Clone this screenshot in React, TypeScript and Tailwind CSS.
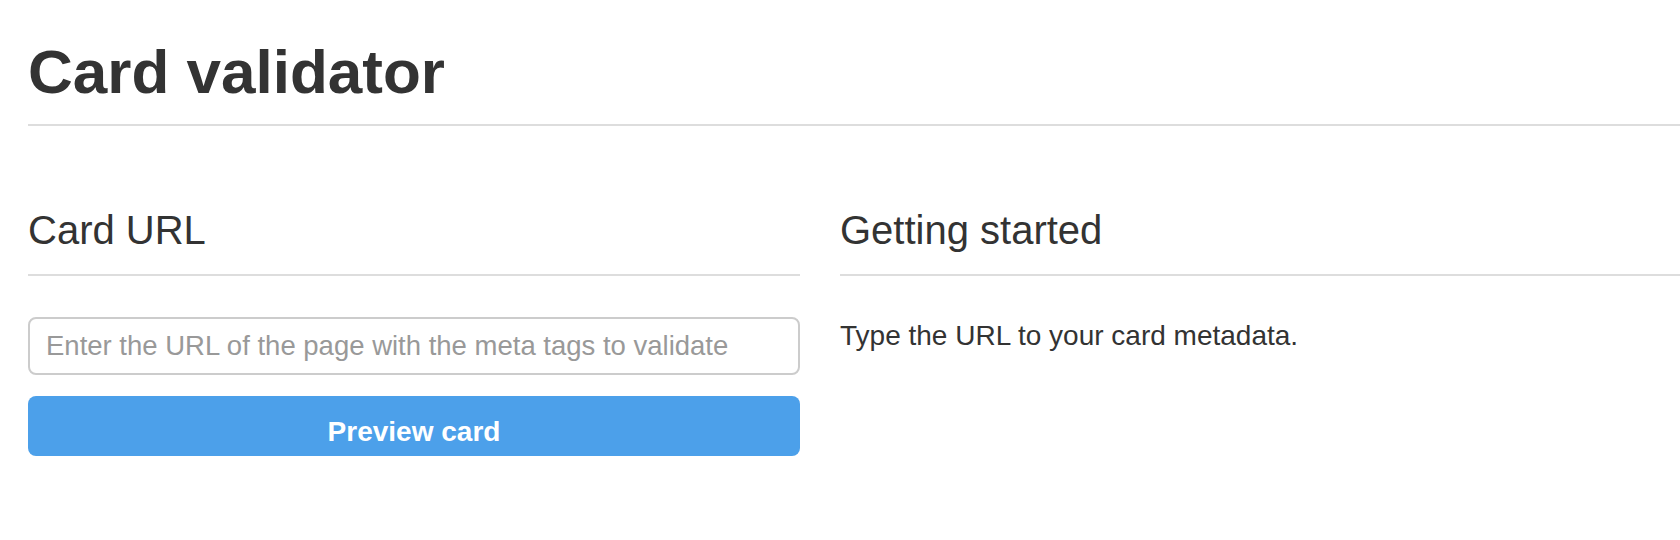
export default function App() {
  return (
    <div
      className="h-[540px] w-full overflow-hidden bg-white pl-[28px] text-[#333]"
      style={{ fontFamily: '"Liberation Sans", Arial, sans-serif' }}
    >
      <div className="border-b-2 border-[#ddd] pb-[17px] pt-[37px]">
        <h1 className="text-[62px] font-bold leading-[70px]">Card validator</h1>
      </div>

      <div className="mt-[80px] flex gap-[40px]">
        <div className="w-[772px] shrink-0">
          <h3 className="border-b-2 border-[#ddd] pb-[20px] text-[40px] leading-[48px]">
            Card URL
          </h3>
          <input
            type="text"
            placeholder="Enter the URL of the page with the meta tags to validate"
            className="mt-[41px] block h-[58px] w-full rounded-[8px] border-2 border-[#ccc] px-[16px] text-[27.5px] text-[#333] outline-none placeholder:text-[#999]"
          />
          <button className="mt-[21px] flex h-[60px] w-full items-center justify-center rounded-[8px] bg-[#4ca0ea] pt-[12px] text-[28px] font-bold text-white">
            Preview card
          </button>
        </div>

        <div className="flex-1">
          <h3 className="border-b-2 border-[#ddd] pb-[20px] text-[40px] leading-[48px]">
            Getting started
          </h3>
          <p className="mt-[40px] text-[28px] leading-[40px]">
            Type the URL to your card metadata.
          </p>
        </div>
      </div>
    </div>
  )
}
